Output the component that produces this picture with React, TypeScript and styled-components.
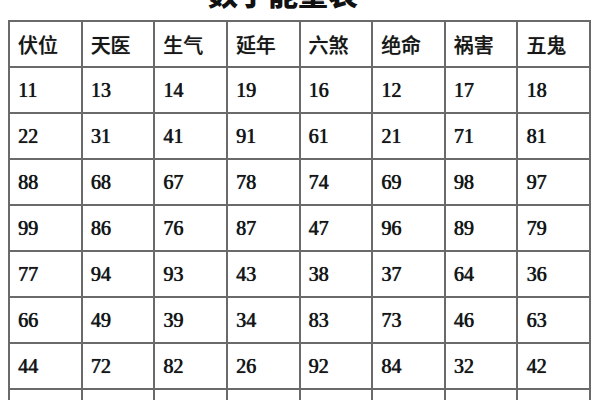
import React from "react";
import styled, { createGlobalStyle } from "styled-components";

const Global = createGlobalStyle`
  html, body { margin: 0; padding: 0; background: #ffffff; }
  body { width: 600px; height: 400px; overflow: hidden; }
`;

const Page = styled.div`
  width: 600px;
  height: 400px;
  overflow: hidden;
  background: #ffffff;
  padding-left: 8px;
  box-sizing: border-box;
  display: flex;
  flex-direction: column;
`;

const Title = styled.h1`
  margin: -23px 0 13px 0;
  padding-right: 42px;
  height: 30px;
  font-family: "Noto Sans CJK SC", sans-serif;
  font-size: 30px;
  line-height: 30px;
  font-weight: 900;
  color: #111;
  text-align: center;
`;

const Grid = styled.div`
  width: 583px;
  box-sizing: border-box;
  display: grid;
  grid-template-columns: repeat(8, 1fr);
  grid-auto-rows: 44px;
  gap: 2px;
  padding: 2px;
  background: #6a6a6a;
`;

const Cell = styled.div<{ $head?: boolean }>`
  background: #ffffff;
  display: flex;
  align-items: center;
  padding-left: 8px;
  color: #161616;
  font-family: ${(p) =>
    p.$head ? `"Noto Sans CJK SC", sans-serif` : `"Liberation Serif", serif`};
  font-size: 20px;
  font-weight: ${(p) => (p.$head ? 500 : 400)};
  text-shadow: ${(p) =>
    p.$head
      ? "0 0 0.8px rgba(0, 0, 0, 0.5)"
      : "0.5px 0 0 #161616, 0 0 1px rgba(0, 0, 0, 0.5)"};
`;

const headers = ["伏位", "天医", "生气", "延年", "六煞", "绝命", "祸害", "五鬼"];
const rows = [
  ["11", "13", "14", "19", "16", "12", "17", "18"],
  ["22", "31", "41", "91", "61", "21", "71", "81"],
  ["88", "68", "67", "78", "74", "69", "98", "97"],
  ["99", "86", "76", "87", "47", "96", "89", "79"],
  ["77", "94", "93", "43", "38", "37", "64", "36"],
  ["66", "49", "39", "34", "83", "73", "46", "63"],
  ["44", "72", "82", "26", "92", "84", "32", "42"],
  ["33", "27", "28", "62", "29", "48", "23", "24"],
];

export default function App() {
  return (
    <>
      <Global />
      <Page>
        <Title>数字能量表</Title>
        <Grid>
          {headers.map((h) => (
            <Cell key={h} $head>
              {h}
            </Cell>
          ))}
          {rows.map((r, i) =>
            r.map((v, j) => <Cell key={`${i}-${j}`}>{v}</Cell>)
          )}
        </Grid>
      </Page>
    </>
  );
}
